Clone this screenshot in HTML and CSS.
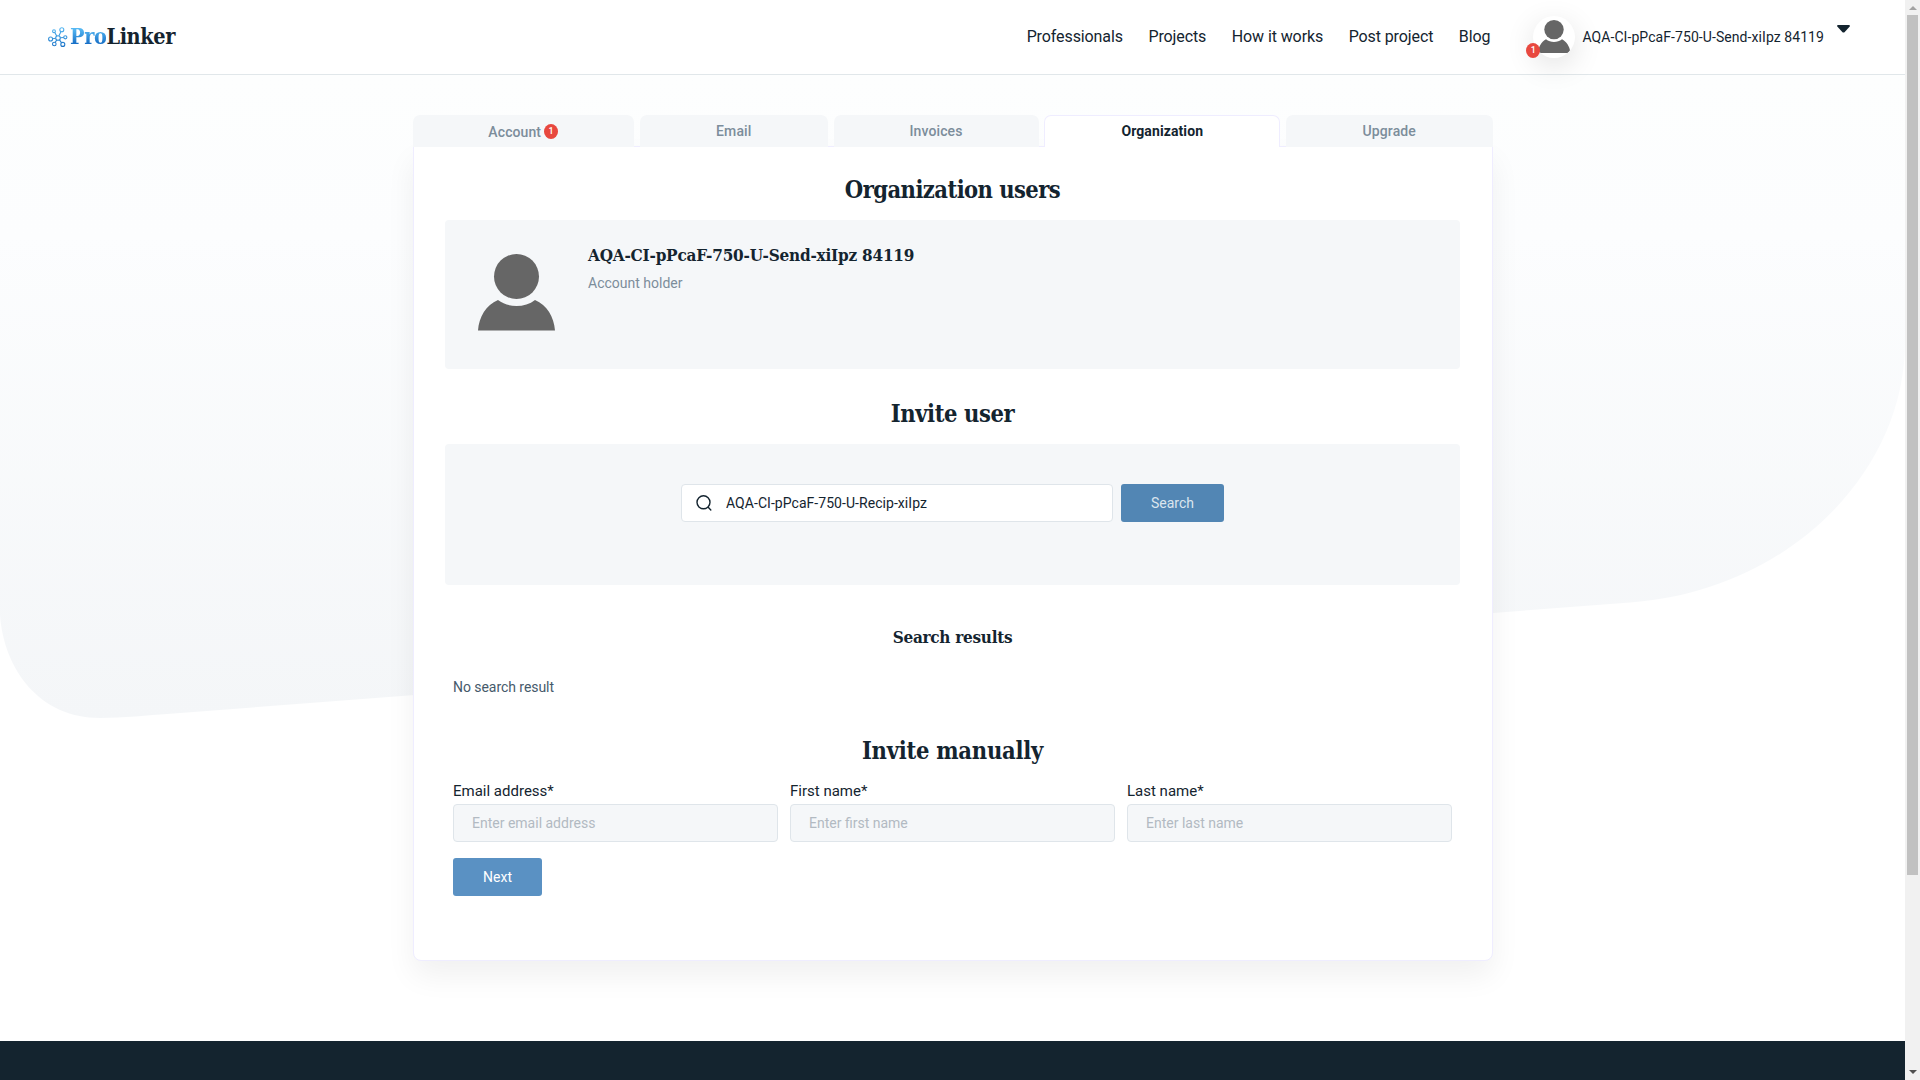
FILE: index.html
```html
<!DOCTYPE html>
<html lang="en">
<head>
<meta charset="utf-8">
<title>ProLinker – Organization</title>
<link rel="stylesheet" href="styles.css">
</head>
<body>
<div class="page">
  <svg class="backdrop" width="1905" height="720" viewBox="0 0 1905 720" aria-hidden="true">
    <defs><linearGradient id="bg" x1="0" y1="0" x2="0" y2="1"><stop offset="0" stop-color="#fdfefe"/><stop offset=".25" stop-color="#fcfdfe"/><stop offset="1" stop-color="#f4f6f8"/></linearGradient></defs>
    <path fill="url(#bg)" d="M0 75V615C4 670 40 718 100 718C122 718 150 715 167 714L1630 602.500C1785 592 1905 475 1905 342V75Z"/>
  </svg>
  <header class="topbar">
    <a class="logo">
      <svg width="20" height="20" viewBox="0 0 20 20" fill="none" stroke="url(#lg)" stroke-width="1.1">
        <defs><linearGradient id="lg" gradientUnits="userSpaceOnUse" x1="0" y1="0" x2="0" y2="20"><stop offset="0" stop-color="#55b8f3"/><stop offset="1" stop-color="#1a72c6"/></linearGradient></defs>
        <circle cx="10" cy="11" r="2.300"/><circle cx="13.8" cy="2.7" r="2"/><circle cx="6" cy="4.2" r="1.4"/><circle cx="2.6" cy="12" r="2"/><circle cx="17.3" cy="10.3" r="1.6"/><circle cx="6.3" cy="17" r="1.8"/><circle cx="14.8" cy="17.4" r="2"/>
        <path d="M11 8.800l2-4.200M8.700 9L6.800 5.400M7.600 11.300l-3 .4M12.300 10.800l3.400-.3M8.700 13l-1.500 2.400M11.500 12.900l2.100 3"/>
      </svg>
      <span class="wordmark"><span class="wordmark-pro">Pro</span><span>Linker</span></span>
    </a>
    <nav class="nav"><a>Professionals</a><a>Projects</a><a>How it works</a><a>Post project</a><a>Blog</a></nav>
    <div class="user">
      <div class="user-avatar">
        <svg width="42" height="42" viewBox="0 0 42 42" fill="#666"><circle cx="21" cy="13.6" r="9.7"/><path d="M5 37C5.400 31 8.500 25.500 13 23.300C17.500 27 24.500 27 29 23.300C33.500 25.500 36.600 31 37 34.500L35 37Z"/></svg>
        <span class="badge badge-float">1</span>
      </div>
      <span class="user-name">AQA-CI-pPcaF-750-U-Send-xiIpz 84119</span>
      <svg class="caret" width="13" height="8" viewBox="0 0 13 8"><path fill="#14242f" d="M1 0H12Q13.500 .5 12.500 1.800L7.500 7.200Q6.500 8 5.500 7.200L.5 1.800Q-.5 .5 1 0Z"/></svg>
    </div>
  </header>
  <main class="main">
    <div class="tabs">
      <a class="tab tab-account">Account <span class="badge">1</span></a>
      <a class="tab">Email</a>
      <a class="tab">Invoices</a>
      <a class="tab tab-active">Organization</a>
      <a class="tab">Upgrade</a>
    </div>
    <section class="card">
      <h2 class="title title-users">Organization users</h2>
      <div class="panel member">
        <svg width="77" height="77" viewBox="0 0 77 77" fill="#666"><circle cx="38.500" cy="22.500" r="22.500"/><path d="M0 76.500C1 63 8 51 20 46C30 54 47 54 57 46C69 51 76 63 77 76.500Z"/></svg>
        <div>
          <h3 class="subtitle">AQA-CI-pPcaF-750-U-Send-xiIpz 84119</h3>
          <p class="role">Account holder</p>
        </div>
      </div>
      <h2 class="title title-invite">Invite user</h2>
      <div class="panel finder">
        <label class="search">
          <svg width="16" height="16" viewBox="0 0 16 16" fill="none" stroke="#14242f" stroke-width="1.400" stroke-linecap="round"><circle cx="7.500" cy="7.300" r="6.500"/><path d="M12.200 12.200L14.800 15"/></svg>
          <input class="search-input" value="AQA-CI-pPcaF-750-U-Recip-xiIpz">
        </label>
        <button class="btn btn-search">Search</button>
      </div>
      <h3 class="subtitle results-title">Search results</h3>
      <p class="empty">No search result</p>
      <h2 class="title title-manual">Invite manually</h2>
      <form class="form">
        <label class="field">Email address*<input placeholder="Enter email address"></label>
        <label class="field">First name*<input placeholder="Enter first name"></label>
        <label class="field">Last name*<input placeholder="Enter last name"></label>
      </form>
      <button class="btn btn-next">Next</button>
    </section>
  </main>
  <footer class="footer"></footer>
</div>
<div class="scrollbar"><i class="arrow arrow-up"></i><i class="thumb"></i><i class="arrow arrow-down"></i></div>
</body>
</html>
```
FILE: styles.css
```css
* { box-sizing: border-box; }
body {
  margin: 0;
  height: 1080px;
  display: flex;
  overflow: hidden;
  background: #fff;
  color: #14242f;
  font: 14px/20px Roboto, sans-serif;
}
h2, h3, p { margin: 0; }
svg { display: block; flex: none; }
input, button { font: inherit; color: inherit; margin: 0; }

.page { position: relative; width: 1905px; height: 1080px; display: flex; flex-direction: column; }
.backdrop { position: absolute; left: 0; top: 0; }

.topbar {
  position: relative;
  height: 75px;
  flex: none;
  display: flex;
  align-items: center;
  padding: 0 55px 0 48px;
  background: #fff;
  border-bottom: 1px solid #e1e7ea;
}
.logo { display: flex; gap: 2px; align-items: center; }
.wordmark { font: bold 21.500px/24px "DejaVu Serif Condensed", "DejaVu Serif", serif; letter-spacing: -.4px; }
.wordmark-pro { background: linear-gradient(#55b8f3 20%, #1168c2 85%); -webkit-background-clip: text; background-clip: text; color: transparent; }
.nav { display: flex; gap: 25.500px; margin-left: auto; font-size: 16px; letter-spacing: -.1px; }
.user { display: flex; align-items: center; margin-left: 43px; }
.user-avatar { position: relative; width: 42px; height: 42px; border-radius: 50%; background: #fff; box-shadow: 0 8px 30px rgba(0, 0, 0, .12); }
.user-avatar svg { border-radius: 50%; }
.user-name { margin: 0 13px 0 7px; letter-spacing: .075px; }
.caret { align-self: flex-start; margin-top: 9px; }
.badge {
  display: inline-block;
  width: 14px;
  height: 15px;
  border-radius: 50%;
  background: #e8483f;
  color: #fff;
  font-size: 9px;
  font-weight: 500;
  line-height: 14px;
  text-align: center;
}
.badge-float { position: absolute; left: -7px; top: 27px; }

.main { position: relative; width: 1080px; margin: 40px auto 0; flex: 1; }
.tabs { position: relative; z-index: 1; display: grid; grid-template-columns: 221.500fr 188fr 205fr 236fr 206.500fr; gap: 5.750px; height: 32px; }
.tab {
  padding: 1px 0 0;
  border-radius: 7px 7px 0 0;
  background: #f5f7f9;
  color: #7c8d9b;
  font-weight: 500;
  letter-spacing: .1px;
  line-height: 30px;
  text-align: center;
}
.tab-active { padding: 0; background: #fff; border: 1px solid #efedff; border-bottom: 0; color: #14242f; font-weight: 700; }
.tab-account { display: flex; justify-content: center; align-items: center; gap: 3px; }
.card {
  margin-top: -1px;
  height: 815px;
  padding: 27px 31.500px 0;
  border: 1px solid #efedff;
  border-radius: 0 0 8px 8px;
  background: #fff;
  box-shadow: 0 15px 30px rgba(0, 0, 0, .06);
}
.title, .subtitle { font-family: "DejaVu Serif Condensed", "DejaVu Serif", serif; font-weight: 700; }
.title { font-size: 23.500px; line-height: 32px; letter-spacing: -.27px; text-align: center; }
.title-users { letter-spacing: -.57px; margin-bottom: 14px; }
.title-invite { letter-spacing: -.42px; margin: 29px 0 14px; }
.title-manual { margin: 38px 0 15px; }
.subtitle { font-size: 17px; line-height: 24px; letter-spacing: -.21px; }
.panel { border-radius: 4px; background: #f5f7f9; }
.member { height: 149px; display: flex; gap: 33px; padding: 23px 33px; }
.member svg { margin-top: 11px; }
.role { margin-top: 6px; color: #7c8d9b; }
.finder { height: 141px; display: flex; justify-content: center; gap: 8px; padding-top: 40px; }
.search {
  width: 432px;
  height: 38px;
  display: flex;
  align-items: center;
  gap: 14px;
  padding: 0 14px;
  border: 1px solid #dfe5ea;
  border-radius: 4px;
  background: #fff;
}
.search-input { flex: 1; border: 0; padding: 0; outline: 0; background: none; letter-spacing: .05px; }
.btn { height: 38px; border: 0; border-radius: 3px; padding: 0 0 1px; color: #fff; }
.btn-search { width: 103px; background: #5286b4; color: #dbe5ee; }
.btn-next { display: block; width: 89px; margin: 16px 0 0 8px; background: #5a91c3; }
.results-title { margin-top: 40px; text-align: center; letter-spacing: -.28px; }
.empty { margin: 28px 0 0 8px; color: #465a6b; letter-spacing: -.05px; }
.form { display: grid; grid-template-columns: repeat(3, 1fr); gap: 12px; padding: 0 8px; }
.field { display: flex; flex-direction: column; gap: 4px; font-size: 15px; line-height: 18px; }
.field input { height: 38px; padding: 0 18px; border: 1px solid #dfe5ea; border-radius: 4px; background: #f5f7f9; font-size: 14px; }
.field input::placeholder { color: #b2bac2; }

.footer { position: relative; height: 39px; flex: none; background: #14242f; }

.scrollbar { width: 15px; height: 1080px; display: flex; flex-direction: column; align-items: center; background: #f1f1f1; }
.thumb { width: 11px; height: 860px; background: #c1c1c1; }
.arrow { border: 4px solid transparent; width: 0; height: 0; }
.arrow-up { margin: 2px 0 5px; border-bottom-color: #a3a3a3; }
.arrow-down { margin: auto 0 2px; border-top-color: #505050; }
```
